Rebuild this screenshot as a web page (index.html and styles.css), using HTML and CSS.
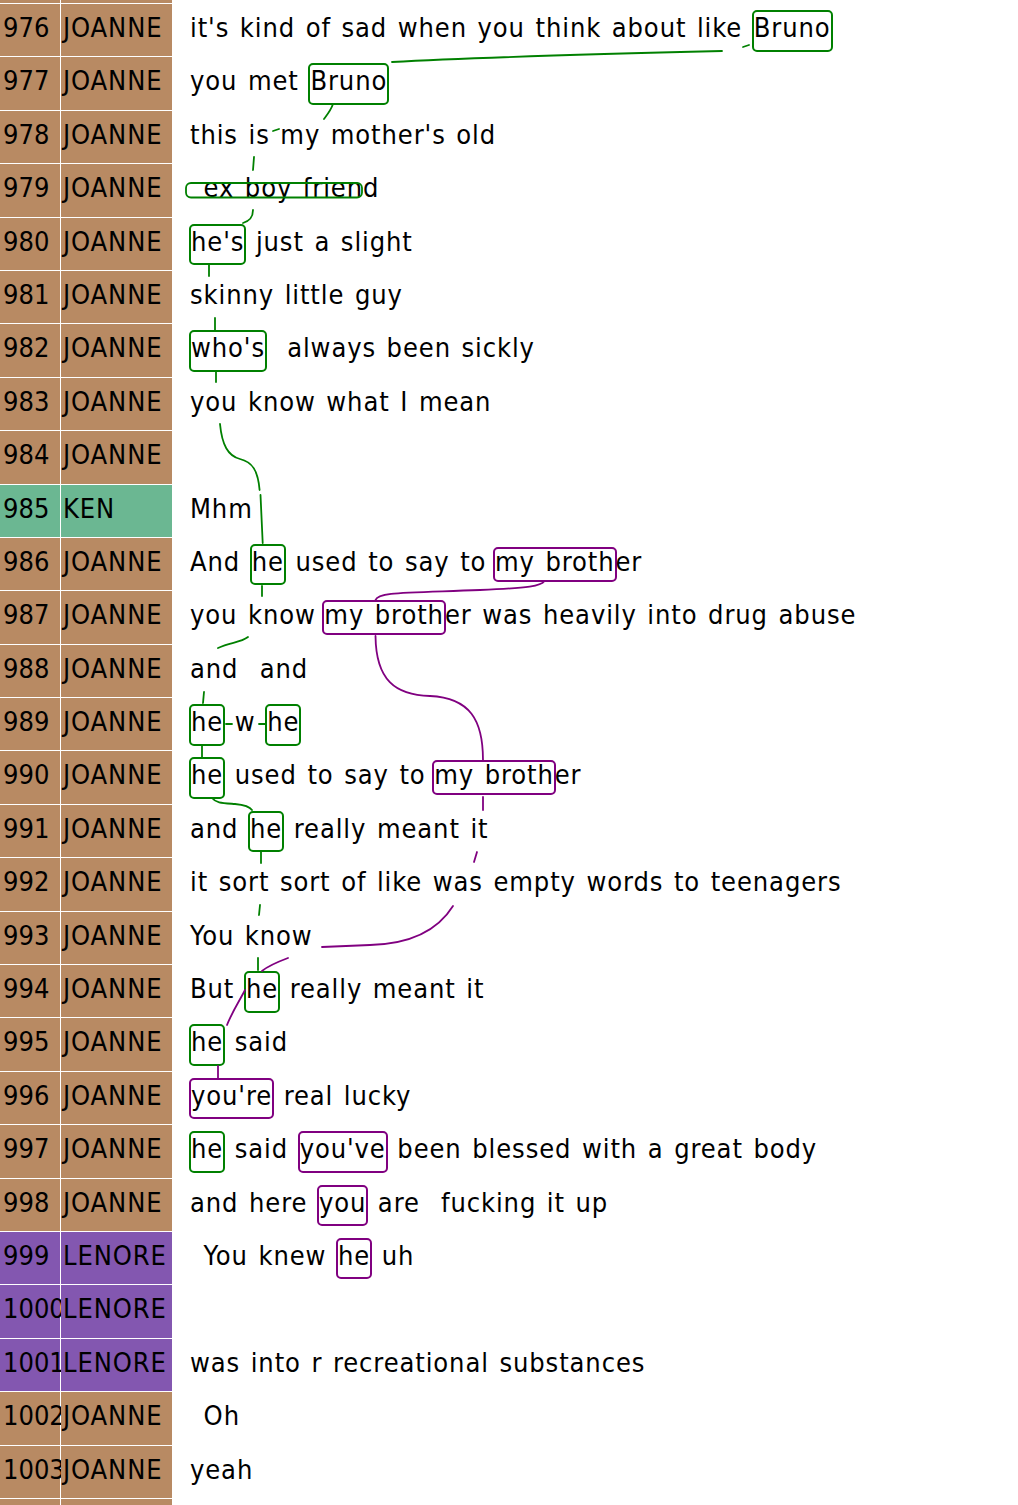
FILE: index.html
```html
<!DOCTYPE html>
<html>
<head>
<meta charset="utf-8">
<link rel="stylesheet" href="styles.css">
</head>
<body>
<div class="table">
  <div class="row jo"><div class="id"></div><div class="spk"></div><div class="utt"></div></div>
  <div class="row jo"><div class="id">976</div><div class="spk">JOANNE</div><div class="utt">it's kind of sad when you think about like <span class="m g">Bruno</span></div></div>
  <div class="row jo"><div class="id">977</div><div class="spk">JOANNE</div><div class="utt">you met <span class="m g">Bruno</span></div></div>
  <div class="row jo"><div class="id">978</div><div class="spk">JOANNE</div><div class="utt">this is my mother's old</div></div>
  <div class="row jo"><div class="id">979</div><div class="spk">JOANNE</div><div class="utt ind"> ex boy friend</div></div>
  <div class="row jo"><div class="id">980</div><div class="spk">JOANNE</div><div class="utt"><span class="m g">he's</span> just a slight</div></div>
  <div class="row jo"><div class="id">981</div><div class="spk">JOANNE</div><div class="utt">skinny little guy</div></div>
  <div class="row jo"><div class="id">982</div><div class="spk">JOANNE</div><div class="utt"><span class="m g">who's</span>  always been sickly</div></div>
  <div class="row jo"><div class="id">983</div><div class="spk">JOANNE</div><div class="utt">you know what I mean</div></div>
  <div class="row jo"><div class="id">984</div><div class="spk">JOANNE</div><div class="utt"></div></div>
  <div class="row ken"><div class="id">985</div><div class="spk">KEN</div><div class="utt">Mhm</div></div>
  <div class="row jo"><div class="id">986</div><div class="spk">JOANNE</div><div class="utt">And <span class="m g">he</span> used to say to <span class="m p s">my broth</span>er</div></div>
  <div class="row jo"><div class="id">987</div><div class="spk">JOANNE</div><div class="utt">you know <span class="m p s">my broth</span>er was heavily into drug abuse</div></div>
  <div class="row jo"><div class="id">988</div><div class="spk">JOANNE</div><div class="utt">and  and</div></div>
  <div class="row jo"><div class="id">989</div><div class="spk">JOANNE</div><div class="utt"><span class="m g">he</span> w <span class="m g">he</span></div></div>
  <div class="row jo"><div class="id">990</div><div class="spk">JOANNE</div><div class="utt"><span class="m g">he</span> used to say to <span class="m p s">my broth</span>er</div></div>
  <div class="row jo"><div class="id">991</div><div class="spk">JOANNE</div><div class="utt">and <span class="m g">he</span> really meant it</div></div>
  <div class="row jo"><div class="id">992</div><div class="spk">JOANNE</div><div class="utt">it sort sort of like was empty words to teenagers</div></div>
  <div class="row jo"><div class="id">993</div><div class="spk">JOANNE</div><div class="utt">You know</div></div>
  <div class="row jo"><div class="id">994</div><div class="spk">JOANNE</div><div class="utt">But <span class="m g">he</span> really meant it</div></div>
  <div class="row jo"><div class="id">995</div><div class="spk">JOANNE</div><div class="utt"><span class="m g">he</span> said</div></div>
  <div class="row jo"><div class="id">996</div><div class="spk">JOANNE</div><div class="utt"><span class="m p">you're</span> real lucky</div></div>
  <div class="row jo"><div class="id">997</div><div class="spk">JOANNE</div><div class="utt"><span class="m g">he</span> said <span class="m p">you've</span> been blessed with a great body</div></div>
  <div class="row jo"><div class="id">998</div><div class="spk">JOANNE</div><div class="utt">and here <span class="m p">you</span> are  fucking it up</div></div>
  <div class="row le"><div class="id">999</div><div class="spk">LENORE</div><div class="utt ind"> You knew <span class="m p">he</span> uh</div></div>
  <div class="row le"><div class="id">1000</div><div class="spk">LENORE</div><div class="utt"></div></div>
  <div class="row le"><div class="id">1001</div><div class="spk">LENORE</div><div class="utt">was into r recreational substances</div></div>
  <div class="row jo"><div class="id">1002</div><div class="spk">JOANNE</div><div class="utt ind"> Oh</div></div>
  <div class="row jo"><div class="id">1003</div><div class="spk">JOANNE</div><div class="utt">yeah</div></div>
  <div class="row jo"><div class="id"></div><div class="spk"></div><div class="utt"></div></div>
</div>
<svg class="links" width="1018" height="1505" viewBox="0 0 1018 1505" xmlns="http://www.w3.org/2000/svg">
  <g class="lg">
    <path d="M743 47 L749 45"/>
    <path d="M722 51 C640 53 480 57 392 62"/>
    <path d="M333 104 C331 110 327 115 324 119"/>
    <path d="M279 129 L273 131"/>
    <rect x="186" y="183" width="176" height="14.5" rx="5"/>
    <path d="M254 157 L253 170"/>
    <path d="M253 210 C253 218 249 221 243 223"/>
    <path d="M209 265 L209 276"/>
    <path d="M215 318 L215 330"/>
    <path d="M216 372 L216 382"/>
    <path d="M220 424 C222 445 228 456 240 459 C252 462 258 470 259.6 490"/>
    <path d="M260.5 495 L262.7 543"/>
    <path d="M262 586 L262 596"/>
    <path d="M248 637 C240 643 230 642 218 648"/>
    <path d="M204 692 L203 703"/>
    <path d="M226 724 L232 724"/>
    <path d="M259 724 L266 724"/>
    <path d="M202 745 L202 758"/>
    <path d="M212 798 C216 803 222 803 235 804 C245 805 250 807 252 810"/>
    <path d="M261 852 L261 863"/>
    <path d="M260 905 L259 915"/>
    <path d="M258 958 L258 970"/>
  </g>
  <g class="lp">
    <path d="M544.5 581 C541 586 530 588 480 590 C400 593 378 592 375.5 600"/>
    <path d="M375.5 636 C376 680 395 695 430 696 C470 698 483 720 483 760"/>
    <path d="M483 797 L483 810"/>
    <path d="M477 852 L474 862"/>
    <path d="M453 906 C438 930 410 944 370 945 L322 947"/>
    <path d="M288 958 C280 961 268 966 262 971"/>
    <path d="M245 990 C240 1000 233 1010 227 1025"/>
    <path d="M218 1066 L218 1078"/>
  </g>
</svg>
</body>
</html>
```
FILE: styles.css
```css
* { box-sizing: border-box; }
html, body { margin: 0; padding: 0; background: #fff; }
body {
  position: relative;
  height: 1505px;
  overflow: hidden;
  font-family: "DejaVu Sans Condensed", "DejaVu Sans", sans-serif;
  font-stretch: condensed;
  font-size: 27px;
  color: #000;
}
.table { margin-top: -50.4px; }
.row { display: flex; height: 53.4px; }
.id, .spk {
  border-top: 1px solid #fff;
  border-right: 1px solid #fff;
  line-height: 48.5px;
  white-space: nowrap;
  flex: none;
}
.id { width: 61px; padding-left: 3px; }
.spk { width: 112px; padding-left: 2px; letter-spacing: 0.9px; }
.utt {
  padding-left: 17px;
  padding-top: 1px;
  line-height: 48.5px;
  white-space: pre;
  letter-spacing: 0.9px;
  word-spacing: 2px;
}
.utt.ind { padding-left: 20px; }
.jo .id, .jo .spk { background: #b88a63; }
.ken .id, .ken .spk { background: #6bb792; }
.le .id, .le .spk { background: #8357b0; }
.m {
  display: inline-block;
  height: 41.5px;
  line-height: 32px;
  padding: 0;
  margin: 0 -1px;
  border: 2px solid;
  border-radius: 5px;
}
.m.s { height: 35px; line-height: 26.3px; margin-left: -4px; }
.g { border-color: #008000; }
.p { border-color: #800080; }
.links {
  position: absolute;
  left: 0;
  top: 0;
  pointer-events: none;
}
.links path, .links rect { fill: none; stroke-width: 1.8; stroke-linecap: round; }
.lg path, .lg rect { stroke: #008000; }
.lp path { stroke: #800080; }
```
